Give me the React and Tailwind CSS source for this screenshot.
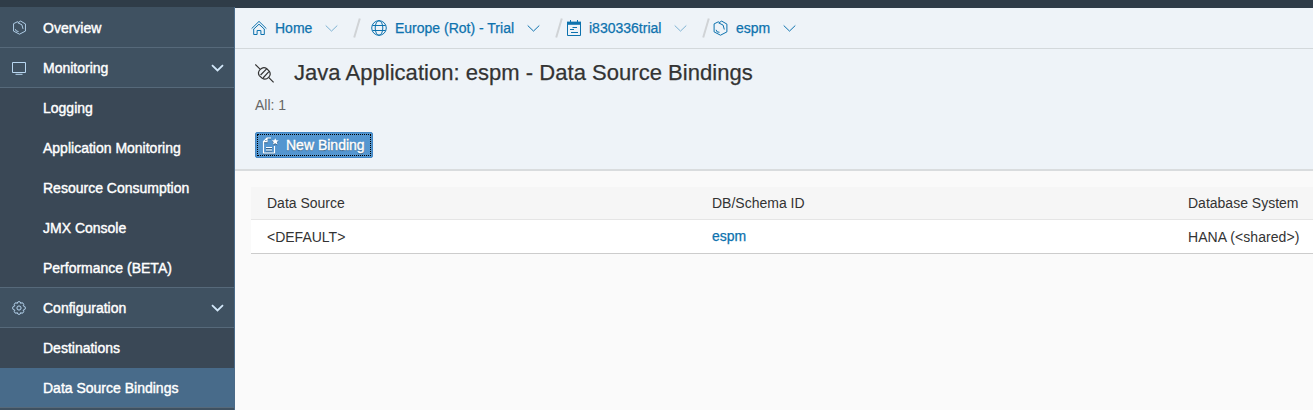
const Svg = ({ w = 16, h = 16, vb, sw = 1, className = "", children }) => (
  <svg width={w} height={h} viewBox={vb || `0 0 ${w} ${h}`} fill="none" stroke="currentColor" strokeWidth={sw} className={"shrink-0 " + className}>
    {children}
  </svg>
);

const Hexagon = ({ className, w = 14, h = 16 }) => (
  <Svg w={w} h={h} vb="0 0 14 16" className={className}>
    <path d="M5.2 1.6.6 3.9v8L7 15.2l6.4-3.3V4.1L8.2 1.1 5.2 2.9M5.2 2.9l4.4 2.2 1.2 4.4M2.6 9.8l.9 2 2.5.5" />
  </Svg>
);
const Monitor = () => (
  <Svg w={14} h={14}>
    <path d="M.5 1.5h13v10H.5zM3.5 13.3h7" />
  </Svg>
);
const Gear = () => (
  <Svg w={14} h={14}>
    <path d="M5.3 2.4Q5.3.6 7 .6t1.7 1.8q1.3-1.3 2.5-.1t-.1 2.5Q13.4 5 13.4 7t-2.3 2.2q1.3 1.3.1 2.5t-2.5-.1q0 1.8-1.7 1.8t-1.7-1.8q-1.3 1.3-2.5.1t.1-2.5Q.6 9 .6 7t2.3-2.2Q1.6 3.5 2.8 2.3t2.5.1z" />
    <circle cx="7" cy="7" r="2.1" />
  </Svg>
);
const Home = () => (
  <Svg w={16} h={16}>
    <path d="M.6 8.6 8 1.4l7.4 7.2M2.4 9.4 8 4.2l5.6 5.2M2.7 9v5.5h3.4v-4h3.8v4h3.4V9" />
  </Svg>
);
const Globe = () => (
  <Svg w={16} h={16}>
    <circle cx="8" cy="8" r="7.3" />
    <ellipse cx="8" cy="8" rx="3.8" ry="7.3" />
    <path d="M1.4 5.5h13.2M1.4 10.5h13.2" />
  </Svg>
);
const Account = () => (
  <Svg w={14} h={16}>
    <path d="M.5 2.5h13v13H.5zM5.5 7.5H10M3 9.5h4M4 12.5h7" />
    <path d="M0 1.6h14v3.2H0z" fill="currentColor" stroke="none" />
    <path d="M3.5 0v2M10.5 0v2" />
  </Svg>
);
const Plug = () => (
  <Svg w={20} h={20} sw={1.2} className="mt-0.5">
    <path d="m.3.5 5 4.9M13.6 13.4l5 5" />
    <path d="M5.3 5.4C3.2 7.4 3 9.6 4.3 11.6l2.9 2.7c2 1.2 4.4 1.1 6.4-.9 1.8-2 2-4.3.8-6.1l-2.8-2.8C9.6 3.2 7.2 3.5 5.3 5.4z" />
    <path d="m5.6 11 6-6.2M8 14l5.9-6.3" />
  </Svg>
);
const NewDocument = () => (
  <Svg w={17} h={17} sw={1.2} className="drop-shadow-[0_1px_0_rgba(0,0,0,0.35)]">
    <path d="M9 1H5L1.5 4.6V16H12.5V9M1.5 4.6H5V1M4 10.5h6M4 13h6" />
    <path d="m13.2 1.2 1 2.1 2.5.2-1.9 1.6.6 2.4-2.2-1.3L11 7.5l.7-2.4-1.9-1.6 2.5-.2z" fill="currentColor" stroke="none" />
  </Svg>
);
const Chevron = ({ className }) => (
  <Svg w={13} h={8} className={className}>
    <path d="m.7 1.5 5.8 5.6 5.8-5.6" />
  </Svg>
);

const GroupRow = ({ icon, label, open }) => (
  <div className="flex h-10 items-center border-b border-[#56697a] bg-[#3f5161] pl-3 pr-[10px]">
    <span className="flex w-[31px] text-[#b8d6f0]">{icon}</span>
    <span className="grow">{label}</span>
    {open && (
      <Svg w={13} h={8} sw={1.8} className="text-[#d3e8fa]">
        <path d="m1 1.2 5.5 5.3L12 1.2" />
      </Svg>
    )}
  </div>
);

const rowTone = {
  plain: "bg-[#3a4856]",
  last: "border-b border-[#56697a] bg-[#3a4856]",
  active: "border-b border-[#56697a] bg-[#486b8a]",
};
const SubRow = ({ label, tone = "plain" }) => (
  <div className={"flex h-10 items-center pl-[43px] " + rowTone[tone]}>{label}</div>
);

const Crumb = ({ icon, label, width, faded }) => (
  <>
    {icon}
    <a className={"ml-2 shrink-0 " + width}>{label}</a>
    <Chevron className={faded ? "opacity-50" : ""} />
  </>
);
const Slash = ({ className }) => (
  <Svg w={8} h={20} sw={2} className={"ml-[15px] text-[#d0d3d6] " + className}>
    <path d="M6.8.5 1.2 19.5" />
  </Svg>
);

export default function App() {
  return (
    <div className="flex h-[410px] w-[1313px] flex-col overflow-hidden bg-[#fafafa] font-['Liberation_Sans',Arial,sans-serif] text-sm text-[#333]">
      <div className="h-2 shrink-0 bg-[#2f3c48]" />
      <div className="flex grow">
        <nav className="-mt-px w-[235px] shrink-0 border-r border-[#4a6a88] bg-[#3f5161] pt-px text-white [-webkit-text-stroke:0.4px_white]">
          <GroupRow icon={<Hexagon w={13} h={15} className="ml-[0.5px]" />} label="Overview" />
          <GroupRow icon={<Monitor />} label="Monitoring" open />
          <SubRow label="Logging" />
          <SubRow label="Application Monitoring" />
          <SubRow label="Resource Consumption" />
          <SubRow label="JMX Console" />
          <SubRow label="Performance (BETA)" tone="last" />
          <GroupRow icon={<Gear />} label="Configuration" open />
          <SubRow label="Destinations" />
          <SubRow label="Data Source Bindings" tone="active" />
        </nav>
        <main className="min-w-0 grow">
          <header className="h-[163px] border-b-2 border-[#d9dcde] bg-[#eef3f8]">
            <div className="flex h-[41px] items-center border-b border-[#d3d8db] pl-4 text-[#0d72ae] [-webkit-text-stroke:0.25px_#0d72ae]">
              <Crumb icon={<Home />} label="Home" width="w-[50px]" faded />
              <Slash className="mr-[10px]" />
              <Crumb icon={<Globe />} label="Europe (Rot) - Trial" width="w-[132px]" />
              <Slash className="mr-1" />
              <Crumb icon={<Account />} label="i830336trial" width="w-[85px]" faded />
              <Slash className="mr-[3px]" />
              <Crumb icon={<Hexagon w={15} />} label="espm" width="w-[47px]" />
            </div>
            <div className="flex h-12 items-center pl-5">
              <Plug />
              <h1 className="ml-[19px] text-[22px] tracking-[0.03px] [-webkit-text-stroke:0.25px_#333]">Java Application: espm - Data Source Bindings</h1>
            </div>
            <p className="pl-5 leading-4 text-[#666]">All: 1</p>
            <button className="ml-5 mt-[19px] flex h-[26px] w-[118px] items-center rounded-[2px] border border-[#4487c4] bg-[#5496d0] p-px text-white">
              <span className="flex h-full w-full items-center border border-dotted border-black pl-[4px] [-webkit-text-stroke:0.4px_white] [text-shadow:0_1px_1px_rgba(0,0,0,0.45)]">
                <NewDocument />
                <span className="ml-[7px] whitespace-nowrap">New Binding</span>
              </span>
            </button>
          </header>
          <div className="ml-4 mt-4">
            <div className="flex h-[33px] items-center border-b border-[#e5e5e5] bg-[#f6f6f6] pl-4">
              <span className="w-[445px]">Data Source</span>
              <span className="w-[476px]">DB/Schema ID</span>
              <span>Database System</span>
            </div>
            <div className="flex h-[34px] items-center border-b border-[#ccc] bg-white pl-4">
              <span className="w-[445px]">&lt;DEFAULT&gt;</span>
              <a className="mb-0.5 w-[476px] text-[#0d72ae] [-webkit-text-stroke:0.25px_#0d72ae]">espm</a>
              <span className="tracking-[0.06px]">HANA (&lt;shared&gt;)</span>
            </div>
          </div>
        </main>
      </div>
    </div>
  );
}
